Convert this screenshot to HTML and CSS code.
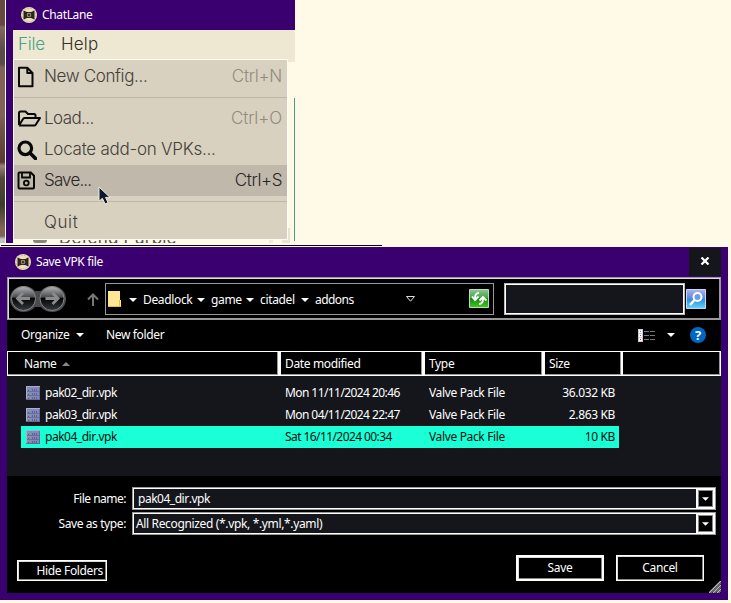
FILE: index.html
```
<!DOCTYPE html>
<html lang="en">
<head>
<meta charset="utf-8">
<title>ChatLane</title>
<link rel="stylesheet" href="styles.css">
</head>
<body>
<svg class="defs" width="0" height="0">
  <symbol id="logo" viewBox="0 0 16 16">
    <circle cx="8" cy="8" r="8" fill="#f0dfbb"/>
    <circle cx="8" cy="8" r="6.800" fill="none" stroke="#a3967a" stroke-width=".5" stroke-dasharray="2 1"/>
    <path d="M2.500 3.500 6 5h4l3.500-1.500v9L10 11H6l-3.500 1.500z" fill="#29251f"/>
    <circle cx="8" cy="8" r="2.300" fill="#b5a684"/><circle cx="8" cy="8" r="1.500" fill="#40392c"/>
  </symbol>
  <symbol id="down" viewBox="0 0 8 4"><path d="M0 0h8L4 4z" fill="currentColor"/></symbol>
  <symbol id="pack" viewBox="0 0 14 14">
    <path d="M0 0h14v14H0z" fill="#8588bb"/>
    <path d="M0 0h1v14H0zM0 0h14v1H0z" fill="#a9acd4"/><path d="M13 1h1v13h-1zM0 13h14v1H0z" fill="#666a96"/>
    <path d="M1 5.500h12M1 9.500h12" stroke="#6a6e9c"/>
    <path d="M6.500 3v2M8.500 3v2M10.500 3v2M6.500 7v2M8.500 7v2M10.500 7v2M6.500 11v2M8.500 11v2M10.500 11v2" stroke="#5e6290"/>
    <path d="M2 2h1v1H2zM2 6h1v1H2zM2 10h1v1H2z" fill="#0f3"/>
    <path d="M2 4h1v1H2zM2 8h1v1H2zM2 12h1v1H2z" fill="#c02848"/>
  </symbol>
</svg>

<section class="app">
  <div class="backdrop"></div>
  <div class="frame"></div>
  <div class="window">
    <header class="app-title"><svg class="logo"><use href="#logo"/></svg><span>ChatLane</span></header>
    <nav class="menubar"><span class="active">File</span><span class="t-help">Help</span></nav>
    <div class="panel"><div class="swatch"></div><span>Defend Purple</span><i class="chip"></i><i class="chip wide"></i></div>
    <div class="menu">
      <div class="item">
        <svg width="20" height="22" viewBox="0 0 20 22"><path d="M3.500 1.800h8.300L17 7v13.200H3.500zM11.800 2v5H17" transform="translate(-1.500 0)" fill="none" stroke="#080808" stroke-width="2" stroke-linejoin="round"/></svg>
        <span class="t-new">New Config...</span><kbd>Ctrl+N</kbd>
      </div>
      <hr>
      <div class="item">
        <svg width="24" height="20" viewBox="0 0 24 20"><path d="M2 16V4q0-1.500 1.500-1.500h5L11 5h6q1.500 0 1.500 1.500V9M2 16.500 6 10q.5-1 1.500-1H23l-4.300 6.800q-.5.800-1.500.8H2" fill="none" stroke="#080808" stroke-width="2" stroke-linejoin="round"/></svg>
        <span class="t-load">Load...</span><kbd class="k-load">Ctrl+O</kbd>
      </div>
      <div class="item">
        <svg width="20" height="20" viewBox="0 0 20 20"><circle cx="8.300" cy="8.300" r="6.300" fill="none" stroke="#080808" stroke-width="3.200"/><path d="m13 13 5.500 5.500" stroke="#080808" stroke-width="3.600" stroke-linecap="round"/></svg>
        <span class="t-locate">Locate add-on VPKs...</span>
      </div>
      <div class="item hover">
        <svg width="19" height="19" viewBox="0 0 19 19"><path d="M2.500 1.500h11.300L17 4.700v11.800q0 1-1 1H2.500q-1 0-1-1v-14q0-1 1-1z" fill="none" stroke="#080808" stroke-width="2"/><path d="M5 2v4.500h8V2" fill="none" stroke="#080808" stroke-width="1.800"/><circle cx="9.300" cy="12" r="2.400" fill="none" stroke="#080808" stroke-width="1.800"/></svg>
        <span class="t-save">Save...</span><kbd>Ctrl+S</kbd>
      </div>
      <hr>
      <div class="item"><svg width="19" height="19"></svg><span class="t-quit">Quit</span></div>
    </div>
  </div>
  <div class="accent"></div>
  <svg class="cursor" width="14" height="20" viewBox="0 0 14 20"><path d="M1 1v14.300l3.400-3 2.700 5.700 3-1.400-2.600-5.200H12z" fill="#0b1830" stroke="#eee9dc" stroke-width="1"/></svg>
</section>
<div class="rule"></div>

<section class="dialog">
  <header class="dlg-title">
    <svg class="logo"><use href="#logo"/></svg><span>Save VPK file</span>
    <div class="close"><svg width="10" height="8" viewBox="0 0 10 8"><path d="m1.500.5 7 7m0-7-7 7" stroke="#fff" stroke-width="2.200"/></svg></div>
  </header>
  <div class="dlg-body">
    <div class="toolbar">
      <svg class="travel" width="58" height="28" viewBox="0 0 58 28">
        <defs><linearGradient id="orb" x2="0" y2="1"><stop stop-color="#b3b5b8"/><stop offset=".43" stop-color="#4c4e51"/><stop offset=".5" stop-color="#050505"/><stop offset="1" stop-color="#333b40"/></linearGradient></defs>
        <path d="M14 1q8 0 12 5h6q4-5 12-5a13 13 0 0 1 0 26q-8 0-12-5h-6q-4 5-12 5A13 13 0 0 1 14 1" fill="#4b4b4d"/>
        <circle cx="14.500" cy="13.500" r="12" fill="url(#orb)" stroke="#85878a"/><circle cx="43" cy="13.500" r="12" fill="url(#orb)" stroke="#85878a"/>
        <path d="M21 13.500H9m5-5.500-5.500 5.500L14 19M36.500 13.500h12m-5-5.500 5.500 5.500-5.500 5.500" fill="none" stroke="#8a8b8d" stroke-width="2.800"/>
      </svg>
      <svg class="up" width="12" height="13" viewBox="0 0 12 13"><path d="M6 13V2M1 6.500l5-5 5 5" fill="none" stroke="#777" stroke-width="2"/></svg>
      <div class="address">
        <svg class="folder" width="13" height="16" viewBox="0 0 13 16"><path d="M0 0h12v9h1v7H0z" fill="#ffe694"/><path d="M0 15.500h13M11.500 9v6" stroke="#e8bd38"/></svg>
        <svg class="tri first"><use href="#down"/></svg><span class="c-deadlock">Deadlock</span>
        <svg class="tri"><use href="#down"/></svg><span class="c-game">game</span>
        <svg class="tri"><use href="#down"/></svg><span class="c-citadel">citadel</span>
        <svg class="tri"><use href="#down"/></svg><span class="c-addons">addons</span>
        <svg class="history" width="9" height="6" viewBox="0 0 9 6"><path d="M.5.5h8L4.500 5.200z" fill="none" stroke="#ddd"/></svg>
        <svg class="refresh" width="20" height="19" viewBox="0 0 20 19"><defs><linearGradient id="gr" x2="0" y2="1"><stop stop-color="#8ac992"/><stop offset=".45" stop-color="#45a24b"/><stop offset=".5" stop-color="#11890f"/><stop offset="1" stop-color="#48cb20"/></linearGradient></defs><path d="M.5.5h19v18H.5z" fill="url(#gr)" stroke="#b8ddb8"/><path d="M10 4Q6 4 6 9M3 7.500l3 3.500 3.500-3.500M10 15q4 0 4-5m-3.500 1.500L14 8l3.500 3.500" fill="none" stroke="#fff" stroke-width="1.900"/></svg>
      </div>
      <div class="search"></div>
      <svg class="go" width="20" height="20" viewBox="0 0 20 20"><defs><linearGradient id="bl" x2="0" y2="1"><stop stop-color="#a6b7ef"/><stop offset=".48" stop-color="#607fdf"/><stop offset=".5" stop-color="#278dd9"/><stop offset="1" stop-color="#65d4ff"/></linearGradient></defs><path d="M.5.500h19v19H.5z" fill="url(#bl)" stroke="#c8d6f4"/><circle cx="11.500" cy="8" r="4" fill="#6c9be8" stroke="#fff" stroke-width="2"/><path d="m8.500 11-4.500 5" stroke="#fff" stroke-width="2.600"/></svg>
    </div>
    <div class="commands">
      <span class="c-organize">Organize</span><svg class="tri"><use href="#down"/></svg><span class="c-newfolder">New folder</span>
      <svg class="view" width="17" height="13" viewBox="0 0 17 13"><path d="M0 0h5v13H0z" fill="#ccc"/><path d="M1 1h3v3H1zM1 5h3v3H1zM1 9h3v3H1z" fill="#fff"/><path d="M2 2h1v1H2z" fill="#777"/><path d="M2 6h1v1H2z" fill="#36f"/><path d="M2 10h1v1H2z" fill="#e22"/><path d="M6 2.500h5m1 0h5M6 6.500h5m1 0h5M6 10.500h5m1 0h5" stroke="#777"/></svg>
      <svg class="tri"><use href="#down"/></svg>
      <div class="help">?</div>
    </div>
    <div class="columns">
      <div class="h-name"><span>Name</span><svg width="8" height="4" viewBox="0 0 8 4"><path d="M0 4 4 0l4 4z" fill="#888"/></svg></div>
      <div><span class="h-date">Date modified</span></div><div><span>Type</span></div><div><span>Size</span></div><div></div>
    </div>
    <div class="files">
      <div class="row"><svg class="pack"><use href="#pack"/></svg><span class="f-name">pak02_dir.vpk</span><span class="f-date">Mon 11/11/2024 20:46</span><span class="f-type">Valve Pack File</span><span class="f-size">36.032 KB</span></div>
      <div class="row"><svg class="pack"><use href="#pack"/></svg><span class="f-name">pak03_dir.vpk</span><span class="f-date">Mon 04/11/2024 22:47</span><span class="f-type">Valve Pack File</span><span class="f-size">2.863 KB</span></div>
      <div class="row selected"><svg class="pack"><use href="#pack"/></svg><span class="f-name">pak04_dir.vpk</span><span class="f-date">Sat 16/11/2024 00:34</span><span class="f-type">Valve Pack File</span><span class="f-size">10 KB</span></div>
    </div>
    <div class="fields">
      <label class="l-name">File name:</label><div class="combo name"><span class="f-name">pak04_dir.vpk</span><b><svg class="small"><use href="#down"/></svg></b></div>
      <label>Save as type:</label><div class="combo"><span class="c-type">All Recognized (*.vpk, *.yml,*.yaml)</span><b><svg class="small"><use href="#down"/></svg></b></div>
    </div>
    <footer>
      <div class="btn hide">Hide Folders</div>
      <div class="btn primary">Save</div>
      <div class="btn">Cancel</div>
    </footer>
    <svg class="grip" width="12" height="12" viewBox="0 0 12 12"><path d="M0 12 12 0M4 12l8-8M8 12l4-4" stroke="#bbb" stroke-width="1.500"/><path d="m2 12 10-10M6 12l6-6M10 12l2-2" stroke="#666"/></svg>
  </div>
</section>
</body>
</html>
```
FILE: styles.css
```
* { box-sizing: border-box; }
body { margin: 0; width: 731px; height: 603px; overflow: hidden; background: #fff9e8; font: 12px/16px "Noto Sans", "Open Sans", sans-serif; color: #fff; letter-spacing: -.35px; white-space: nowrap; }
svg { display: block; flex: none; }
.defs { position: absolute; }
.logo { width: 16px; height: 16px; }
.tri { width: 8px; height: 4px; }

.app { position: relative; display: flex; height: 243px; }
.backdrop { width: 6px; border-right: 1px solid #fff; background: linear-gradient(#67483e 0 25px, #85685c 27px, #5b4b47 50px 64px, #826257 68px 115px, #72584c 125px, #5b3a2f 162px, #9b8477 166px, #554a3c 178px, #3c3c2b 205px, #806454 228px 236px, #c5c2c6 239px); }
.frame { width: 7px; background: #3a006f; }
.window { width: 282px; position: relative; overflow: hidden; }
.app-title { display: flex; align-items: center; height: 30px; padding-left: 8px; gap: 5px; background: #3a006f; }
.menubar { display: flex; gap: 16px; height: 32px; padding: 3px 5px; background: #eee8d2; color: #33322d; font: 300 17px/22px Inter, sans-serif; letter-spacing: -.2px; }
.menubar .active { color: #4aa389; }
.t-help { letter-spacing: .2px; }
.panel { display: flex; margin-top: 166px; padding-left: 20px; color: #55524c; font: 17px/20px Inter, sans-serif; letter-spacing: .2px; }
.swatch { width: 14px; height: 15px; margin-right: 12px; border-radius: 3px; background: #88847e; }
.chip { width: 4px; height: 15px; background: #f1ead8; margin-left: 92px; }
.chip.wide { width: 8px; margin-left: 9px; background: #eae3d0; }
.menu { position: absolute; left: 0; top: 59px; width: 275px; height: 181px; padding-top: 1px; border: 1px solid #fffdf4; background: #d9d1bf; color: #43403a; font: 300 17px/30px Inter, sans-serif; letter-spacing: -.35px; }
.item { display: flex; align-items: center; height: 31px; padding: 0 5px 0 3px; }
.item svg { margin-right: auto; }
.item span, .item kbd { margin-top: -2px; }
.item span { width: 185px; flex: none; }
.item kbd { width: 53px; text-align: right; font: inherit; letter-spacing: -.25px; color: #918b80; }
.item .k-load { letter-spacing: -.1px; }
.item span:last-child { margin-right: 53px; }
.item .t-load { letter-spacing: -.6px; }
.item .t-locate { letter-spacing: -.25px; }
.item .t-save { letter-spacing: -.85px; }
.item .t-quit { letter-spacing: .6px; }
.item.hover { background: #c1b8ac; color: #292724; }
.item.hover kbd { color: #292724; letter-spacing: -.4px; }
.menu hr { margin: 5px 0; border: 0; height: 1px; background: #bfb6a7; }
.accent { width: 1px; height: 143px; margin-top: 98px; margin-left: -1px; background: #4a9d80; z-index: 1; }
.cursor { position: absolute; left: 98px; top: 186px; }
.rule { width: 381px; height: 1px; margin: 2px 0 1px 1px; background: #050026; }

.dialog { width: 728px; height: 353px; padding: 0 7px; background: #3a006f; }
.dlg-title { display: flex; align-items: center; height: 30px; padding-left: 8px; gap: 5px; }
.close { display: grid; place-items: center; width: 32px; height: 28px; margin-left: auto; padding-bottom: 2px; background: #15161b; }
.dlg-body { position: relative; height: 316px; background: #000; }
.toolbar { display: flex; align-items: center; height: 43px; border: 1px solid #999; box-shadow: inset 1px 1px #ddd, inset -1px -1px #999; }
.travel { margin: 0 0 0 1px; }
.up { margin: 1px 0 0 20px; }
.address { display: flex; align-items: center; width: 389px; height: 32px; margin: 0 10px 0 6px; padding: 1px 4px 0 2px; border: 1px solid #999; }
.address span { flex: none; }
.address .tri { margin: 2px 6px 0 0; }
.address .first { margin-left: 8px; }
.c-deadlock { width: 54px; } .c-game { width: 35px; } .c-citadel { width: 41px; } .c-addons { width: 40px; letter-spacing: -.55px; }
.address span { padding-top: 1px; }
.history { margin-left: 51px; }
.refresh { margin: -2px 0 0 auto; }
.search { width: 181px; height: 32px; margin: 0 1px 0 0; border: 1px solid #bbb; background: #15161b; box-shadow: inset 0 0 0 1px #fff; }
.commands { display: flex; align-items: center; height: 31px; padding: 0 15px 1px 14px; }
.c-organize { width: 55px; }
.c-newfolder { margin-left: 22px; }
.view { margin: 0 12px 0 auto; }
.help { width: 16px; height: 16px; margin-left: 15px; border-radius: 8px; background: #0067c5; font: bold 13px/16px "Noto Sans", sans-serif; text-align: center; }
.columns { display: grid; grid-template-columns: 272px 144px 120px 79px 99px; height: 25px; }
.columns div { display: flex; align-items: center; padding: 1px 0 0 4px; border: 1px solid #fff; border-left-width: 2px; box-shadow: inset -1px -1px #999; }
.columns div:first-child { padding-left: 15px; gap: 6px; border-left-width: 1px; padding-left: 16px; }
.columns div:last-child { border-left-width: 1px; }
.files { height: 100px; padding: 6px 102px 0 14px; background: #15161b; }
.row { display: grid; grid-template-columns: 24px 240px 144px 100px 90px; align-items: center; height: 22px; padding-right: 4px; }
.row.selected { width: 598px; background: #1affd5; color: #07100f; }
.pack { width: 14px; height: 14px; margin: -1px 0 0 5px; }
.f-name { font-kerning: none; letter-spacing: -.48px; }
.f-date { letter-spacing: -.58px; }
.f-size { width: 86px; text-align: right; }
.fields { display: grid; grid-template-columns: 119px 584px; column-gap: 6px; row-gap: 2px; padding-top: 11px; }
.fields label { height: 23px; text-align: right; line-height: 23px; letter-spacing: -.4px; }
.fields .l-name { letter-spacing: -.5px; }
.combo { display: flex; align-items: center; height: 23px; padding-left: 3px; border: 1px solid #999; box-shadow: inset 0 0 0 1px #fff; background: #15161b; }
.combo.name { padding-left: 5px; }
.combo b { display: grid; place-items: center; width: 19px; height: 21px; margin-left: auto; border: 2px solid #fff; background: #000; box-shadow: inset 0 0 0 1px #888; }
.small { width: 7px; height: 4px; }
footer { display: flex; align-items: flex-start; gap: 12px; padding: 20px 17px 0 10px; }
.btn { width: 88px; height: 26px; border: 1px solid #fff; box-shadow: inset 1px 1px #ddd, inset -1px -1px #888; text-align: center; line-height: 24px; }
.btn.hide { width: 90px; height: 21px; margin: 5px auto 0 0; padding: 0 3px 0 0; text-align: right; line-height: 20px; }
.btn.primary { border-width: 2px; line-height: 22px; }
.grip { position: absolute; right: 0; bottom: 0; }
```
